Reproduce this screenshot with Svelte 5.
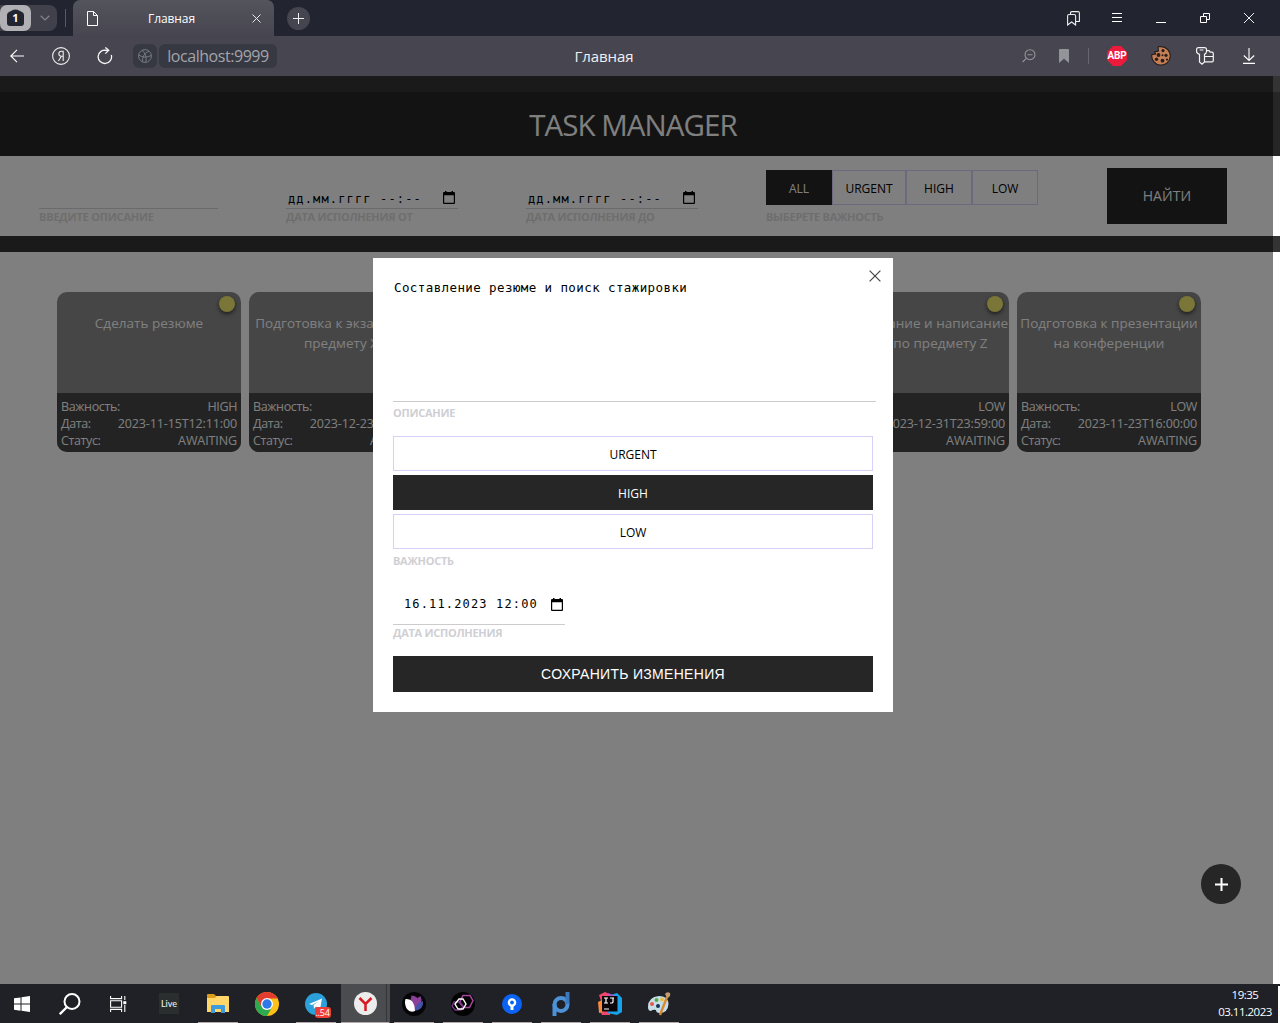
<script>
  const priorities = ['ALL', 'URGENT', 'HIGH', 'LOW'];
  const editPriorities = ['URGENT', 'HIGH', 'LOW'];
  const tasks = [
    { lines: ['Сделать резюме'], priority: 'HIGH', date: '2023-11-15T12:11:00' },
    { lines: ['Подготовка к экзамену по', 'предмету X'], priority: 'HIGH', date: '2023-12-23T10:00:00' },
    { lines: ['Курсовая работа'], priority: 'HIGH', date: '2023-12-20T12:00:00' },
    { lines: ['Составление резюме'], priority: 'HIGH', date: '2023-11-16T12:00:00' },
    { lines: ['Исследование и написание', 'статьи по предмету Z'], priority: 'LOW', date: '2023-12-31T23:59:00' },
    { lines: ['Подготовка к презентации', 'на конференции'], priority: 'LOW', date: '2023-11-23T16:00:00' }
  ];
  const apps = ['live', 'explorer', 'chrome', 'telegram', 'yandex', 'petal', 'hexes', 'source', 'pd', 'idea', 'paint'];
</script>

{#snippet calendar()}
  <svg class="cal" width="12" height="13" viewBox="0 0 12 13">
    <path d="M1 1h1V0h1.500v1h5V0H10v1h1q1 0 1 1v10q0 1-1 1H1q-1 0-1-1V2q0-1 1-1zM1.200 4.200v7.600h9.600V4.200z" fill="currentColor" fill-rule="evenodd" />
  </svg>
{/snippet}

<div class="screen">
  <div class="tabs">
    <div class="group">
      <div class="count">
        <svg width="17" height="18" viewBox="0 0 17 18"><path d="M6.5.8Q8.500 0 10.500.8L15 3Q17 4 17 6v8q0 3-3 3H3q-3 0-3-3V6q0-2 2-3z" fill="#22252f" /></svg>
        <b>1</b>
      </div>
      <svg class="chev" width="10" height="6" viewBox="0 0 10 6" fill="none" stroke="#85868d" stroke-width="1.2"><path d="M.7.8 5 5 9.300.8" /></svg>
    </div>
    <i class="sep"></i>
    <div class="tab">
      <svg width="11" height="15" viewBox="0 0 11 15" fill="none" stroke="#fff"><path d="M.5.5h6l4 4v10H.5zM6.500.5v4h4" /></svg>
      <span>Главная</span>
      <svg width="9" height="9" viewBox="0 0 9 9" stroke="#e8e8ea"><path d="m.5.5 8 8M8.500.5l-8 8" /></svg>
    </div>
    <div class="new"><svg width="11" height="11" viewBox="0 0 11 11" stroke="#eee"><path d="M0 5.500h11M5.500 0v11" /></svg></div>
    <div class="winbtns">
      <span><svg width="13" height="15" viewBox="0 0 13 15" fill="none" stroke="#eee" stroke-width="1.1"><path d="M.6 14V5q0-1.500 1.500-1.500h5q1.500 0 1.500 1.500v9l-4-3zM3.500 3.500V2Q3.500.6 5 .6h6q1.400 0 1.400 1.400v8.500H8.600" /></svg></span>
      <span><svg width="10" height="10" viewBox="0 0 10 10" stroke="#fff"><path d="M0 .5h10M0 4.500h10M0 8.500h10" /></svg></span>
      <span><svg width="10" height="10" viewBox="0 0 10 10" stroke="#fff"><path d="M0 9.500h10" /></svg></span>
      <span><svg width="10" height="10" viewBox="0 0 10 10" fill="none" stroke="#fff"><path d="M.5 3.500h6v6h-6zM3.500 3V.5h6v6H7" /></svg></span>
      <span><svg width="10" height="10" viewBox="0 0 10 10" stroke="#eee"><path d="m0 0 10 10M10 0 0 10" /></svg></span>
    </div>
  </div>

  <div class="toolbar">
    <div class="nav">
      <span><svg width="14" height="14" viewBox="0 0 14 14" fill="none" stroke="#fff" stroke-width="1.1"><path d="M14 7H1M7 .8.800 7 7 13.200" /></svg></span>
      <span class="ya">
        <svg width="18" height="18" viewBox="0 0 18 18" fill="none" stroke="#f0f0f1" stroke-width="1.1"><circle cx="9" cy="9" r="8.400" /><path d="M11.200 14V4.300H9.500C5.900 4.300 5.900 9.300 9.500 9.300H11M9.300 9.300 6.500 14" /></svg>
      </span>
      <span><svg width="16" height="18" viewBox="0 0 16 18" fill="none" stroke="#f4f4f5" stroke-width="1.300"><path d="M9.500 3.300A6.700 6.700 0 1 0 14.300 8M6.500 3.300h5.200M8.300.4l3.400 2.900L8.300 6.600" /></svg></span>
    </div>
    <div class="site"><svg width="14" height="14" viewBox="0 0 14 14" fill="none" stroke="#777983"><circle cx="7" cy="7" r="6.400" /><path d="M4 1.200Q9 5 8 13.300M11 2Q4 5 4.500 12.800M.6 6Q7 10 13 6.500" /></svg></div>
    <div class="url">localhost:9999</div>
    <div class="page-title">Главная</div>
    <div class="tools">
      <span class="zoom"><svg width="14" height="14" viewBox="0 0 14 14" fill="none" stroke="#93939a" stroke-width="1.100"><circle cx="8" cy="5.700" r="5" /><path d="M5.500 5.700h5M4.300 9.300.6 13" /></svg></span>
      <span class="mark"><svg width="10" height="14" viewBox="0 0 10 14"><path d="M0 1q0-1 1-1h8q1 0 1 1v13L5 9.800 0 14z" fill="#93939a" /></svg></span>
      <span class="divider"></span>
      <span class="abp">ABP</span>
      <span>
        <svg width="20" height="20" viewBox="0 0 20 20"><path d="M7 1.200Q7 .5 10 .6a9.300 9.300 0 1 1-9.200 8L4.500 8 3.800 5.800 7.500 5z" fill="#c47f56" stroke="#26201f" stroke-width="1.200" /><g fill="#2b1d1a"><circle cx="12" cy="4.600" r="1.600" /><circle cx="7.500" cy="9" r="1.900" /><circle cx="15" cy="9.300" r="1.600" /><circle cx="5.500" cy="13.300" r="1.700" /><circle cx="11.500" cy="14.700" r="1.900" /><circle cx="11.500" cy="9.200" r="1" /><circle cx="16" cy="13.600" r="1.100" /></g></svg>
      </span>
      <span><svg width="18" height="18" viewBox="0 0 18 18" fill="none" stroke="#f4f4f5" stroke-width="1.200"><path d="M2.500.6h6q2 0 2 2v2q0 2-2 2.700V15L6 17.200 3.500 15V7.300Q.6 6.500.6 4.500v-2q0-1.900 1.900-1.900zM3.800 3h3.600M10.500 3.600H13l1.200 1.600H16q1.300 0 1.300 1.300v7q0 1.300-1.300 1.300H8.500M8.500 9.500h8.800" /></svg></span>
      <span><svg width="12" height="16" viewBox="0 0 12 16" fill="none" stroke="#fff" stroke-width="1.100"><path d="M6 0v12.500M.8 7.500 6 12.500l5.200-5M0 15.400h12" /></svg></span>
    </div>
  </div>

  <main class="page">
    <div class="band"></div>
    <header><h1>TASK MANAGER</h1></header>
    <section class="filters">
      <div class="field desc"><div class="line"></div><label>ВВЕДИТЕ ОПИСАНИЕ</label></div>
      <div class="field date"><div class="line"><span>дд.мм.гггг --:--</span>{@render calendar()}</div><label>ДАТА ИСПОЛНЕНИЯ ОТ</label></div>
      <div class="field date"><div class="line"><span>дд.мм.гггг --:--</span>{@render calendar()}</div><label>ДАТА ИСПОЛНЕНИЯ ДО</label></div>
      <div class="field prio">
        <div class="choices">
          {#each priorities as p}<button class:on={p === 'ALL'} class:wide={p === 'URGENT'}>{p}</button>{/each}
        </div>
        <label>ВЫБЕРЕТЕ ВАЖНОСТЬ</label>
      </div>
      <button class="find">НАЙТИ</button>
    </section>
    <div class="band"></div>
    <section class="cards">
      {#each tasks as t}
        <article>
          <i class="dot"></i>
          <div class="name">{#each t.lines as l}<div>{l}</div>{/each}</div>
          <dl>
            <div><dt>Важность:</dt><dd>{t.priority}</dd></div>
            <div><dt>Дата:</dt><dd class="when">{t.date}</dd></div>
            <div><dt>Статус:</dt><dd class="state">AWAITING</dd></div>
          </dl>
        </article>
      {/each}
    </section>

    <div class="overlay"></div>
    <button class="add" aria-label="add"><svg width="13" height="13" viewBox="0 0 13 13" stroke="#fff" stroke-width="2"><path d="M0 6.500h13M6.500 0v13" /></svg></button>

    <div class="modal">
      <svg class="close" width="12" height="12" viewBox="0 0 12 12" stroke="#444" stroke-width="1.200"><path d="m.6.6 10.800 10.800M11.400.6.600 11.400" /></svg>
      <div class="text">Составление резюме и поиск стажировки</div>
      <label class="l1">ОПИСАНИЕ</label>
      <div class="stack">
        {#each editPriorities as p}<button class:on={p === 'HIGH'}>{p}</button>{/each}
      </div>
      <label class="l2">ВАЖНОСТЬ</label>
      <div class="due"><span>16.11.2023 12:00</span>{@render calendar()}</div>
      <label class="l3">ДАТА ИСПОЛНЕНИЯ</label>
      <button class="save">СОХРАНИТЬ ИЗМЕНЕНИЯ</button>
    </div>
  </main>

  <footer>
    <div class="sys"><svg width="16" height="16" viewBox="0 0 16 16" fill="#fff"><path d="M0 2.300 6.500 1.400V7.500H0zM7.500 1.200 16 0v7.500H7.500zM0 8.500h6.500v6.200L0 13.800zM7.500 8.500H16V16l-8.500-1.200z" /></svg></div>
    <div class="sys"><svg width="22" height="22" viewBox="0 0 22 22" fill="none" stroke="#fff" stroke-width="2"><circle cx="13" cy="8.500" r="7.500" /><path d="M8 14 .8 21.200" stroke-width="2.300" /></svg></div>
    <div class="sys"><svg width="17" height="16" viewBox="0 0 17 16" fill="none" stroke="#fff" stroke-width="1.100"><path d="M.6 0v2.600h11V0M.6 16v-2.600h11V16M.6 4.700h11v6.600H.6zM14.800 0v4M14.800 9v7" /><path d="M13.300 5.200h3v3h-3z" fill="#fff" stroke="none" /></svg></div>
    {#each apps as a}
      <div class="app" class:active={a === 'yandex'} class:running={a !== 'live' && a !== 'chrome'}>
        {#if a === 'live'}
          <span class="live">Live</span>
        {:else if a === 'explorer'}
          <svg width="22" height="19" viewBox="0 0 22 19"><path d="M0 1q0-1 1-1h6l2 2h12v5H0z" fill="#dc9c1b" /><path d="M0 4h8l1.500-2H21q1 0 1 1v15H0z" fill="#ffd667" /><path d="M4 19v-7q0-1 1-1h12q1 0 1 1v7h-4v-4H8v4z" fill="#3c9bdc" /></svg>
        {:else if a === 'chrome'}
          <svg width="24" height="24" viewBox="0 0 24 24"><circle cx="12" cy="12" r="12" fill="#fbc116" /><path d="M1.600 6A12 12 0 0 0 12 24L17.200 15 12 12 6.800 15z" fill="#2da94f" /><path d="M1.600 6 6.800 15 12 12 12 6.500H22.600A12 12 0 0 0 1.600 6z" fill="#e33b2e" /><circle cx="12" cy="12" r="6" fill="#fff" /><circle cx="12" cy="12" r="4.700" fill="#2d79e8" /></svg>
        {:else if a === 'telegram'}
          <svg width="22" height="22" viewBox="0 0 22 22"><circle cx="11" cy="11" r="11" fill="#2ca0da" /><path d="m4 11 13-5.500-2 11-4-3-2 2.200L8.500 12 14 8l-7 4z" fill="#fff" /></svg>
          <em>..54</em>
        {:else if a === 'yandex'}
          <svg width="23" height="23" viewBox="0 0 23 23"><circle cx="11.500" cy="11.500" r="11.500" fill="#ececec" /><path d="M5.500 6 11.500 12 17.500 6M11.500 12v7" stroke="#d8191f" stroke-width="2.500" fill="none" /></svg>
        {:else if a === 'petal'}
          <svg width="24" height="24" viewBox="0 0 24 24"><circle cx="12" cy="12" r="12" fill="#050507" /><path d="M18.500 4q4 7-7 15-1-11 7-15z" fill="#8b4097" /><path d="M9.500 3.500Q15 4 17 8q-1 7-5 10-5-7-2.500-14.500z" fill="#8b4097" /><path d="M21 9q1 9-9 10 2-8 9-10z" fill="#4652a8" /><path d="M3.500 7q9-1 9.500 12-5 2-8-2-3-5-1.500-10z" fill="#fff" /></svg>
        {:else if a === 'hexes'}
          <svg width="24" height="24" viewBox="0 0 24 24" fill="none"><circle cx="12" cy="12" r="12" fill="#020203" /><path d="M12 3.500h7l3 5-3.500 7h-6l-4-5z" stroke="#a4489e" stroke-width="1.500" /><path d="M3 10h6l3 4-2 4H4l-3-4z" stroke="#7d3686" stroke-width="1.300" /><path d="M8 7h4l3 5-3 5H7l-3-5z" stroke="#fff" stroke-width="1.400" /></svg>
        {:else if a === 'source'}
          <svg width="20" height="20" viewBox="0 0 20 20"><circle cx="10" cy="10" r="10" fill="#0b62f3" /><circle cx="10" cy="8.500" r="3.100" fill="none" stroke="#fff" stroke-width="2.400" /><path d="M8.500 12h3v4h-3z" fill="#fff" /></svg>
        {:else if a === 'pd'}
          <svg width="18" height="24" viewBox="0 0 18 24" fill="none" stroke="#4d91d6" stroke-width="4"><circle cx="9" cy="12.500" r="6.500" /><path d="M2.500 12v12" /><path d="M15.500 0v12" stroke="#3c78bd" /></svg>
        {:else if a === 'idea'}
          <svg width="24" height="24" viewBox="0 0 24 24"><path d="m1 3 6-3 9 4-4 19H4l-3-6 3-5z" fill="#f2456b" /><path d="m0 10 6-3v13l-5 1z" fill="#fb8a3c" /><path d="m13 3 6-2 5 5v14l-5 3-10-2z" fill="#16a3ec" /><path d="m10 1 8 3-6 4z" fill="#a857d4" /><path d="M4 4h15.500v15.500H4z" fill="#0c0608" /><path d="M6 6h4M8 6v5M6 11h4M12 6h4M15 6v4q0 1-1.500 1H12M6 17h5" stroke="#fff" stroke-width="1.200" fill="none" /></svg>
        {:else}
          <svg width="24" height="24" viewBox="0 0 24 24"><path d="M1 15Q1 5 12 4q9 0 9.500 8-.5 9-9 9-3.500 0-3.500-3-3-1-5 1-3 0-3-4z" fill="#c6deea" /><circle cx="5" cy="12" r="2" fill="#e8564a" /><circle cx="9.500" cy="8" r="2" fill="#58ab4b" /><circle cx="15" cy="7.500" r="2" fill="#e9bf3c" /><circle cx="11" cy="14" r="2" fill="#17334d" /><path d="m20 5-7 18" stroke="#d8892e" stroke-width="2.400" /><path d="M18 2q2-3 5-1 1 4-3 5z" fill="#c59a6b" /></svg>
        {/if}
      </div>
    {/each}
    <div class="clock"><span>19:35</span><span class="day">03.11.2023</span></div>
    <i class="edge"></i>
  </footer>
</div>

<style>
  :global(body) { margin: 0; background: #fff; }
  .screen, .screen * { box-sizing: border-box; }
  .screen { width: 1280px; height: 1023px; display: flex; flex-direction: column; overflow: hidden; font-family: 'Segoe UI', 'Open Sans', 'Noto Sans', sans-serif; }
  svg { display: block; flex: none; }
  button { font: inherit; border: 0; padding: 0; margin: 0; border-radius: 0; }

  .tabs { height: 36px; flex: none; background: #22252f; display: flex; align-items: center; }
  .group { width: 57px; height: 26px; border-radius: 0 8px 8px 0; background: #40414a; display: flex; align-items: center; }
  .count { width: 31px; height: 26px; border-radius: 7px; background: #b1b1b5; display: grid; place-items: center; }
  .count > * { grid-area: 1 / 1; }
  .count b { color: #fff; font-size: 11px; line-height: 16px; }
  .chev { margin-left: 9px; }
  .sep { width: 1px; height: 18px; background: #565862; margin: 0 7px 0 8px; }
  .tab { width: 201px; height: 36px; border-radius: 7px 7px 0 0; background: linear-gradient(#54545d, #474650); display: flex; align-items: center; padding: 0 13px 0 14px; justify-content: space-between; color: #fff; font-size: 12px; letter-spacing: -.1px; }
  .tab span { padding-right: 7px; }
  .new { width: 23px; height: 23px; border-radius: 50%; background: #44454e; margin-left: 13px; display: grid; place-items: center; }
  .winbtns { margin-left: auto; margin-right: 9px; display: flex; }
  .winbtns span, .nav span, .tools span { width: 44px; flex: none; display: grid; place-items: center; }

  .toolbar { height: 40px; flex: none; background: #474650; display: flex; align-items: center; }
  .nav { display: flex; margin-left: -5px; width: 138px; }
  .site { width: 24px; height: 24px; background: #363842; border-radius: 6px; display: grid; place-items: center; margin-right: 2px; }
  .url { width: 118px; height: 24px; border-radius: 6px; background: #363842; color: #a3a3aa; font-size: 16px; line-height: 24px; text-align: center; letter-spacing: -.45px; }
  .page-title { width: 654px; text-align: center; color: #f0f0f2; font-size: 15px; letter-spacing: -.1px; }
  .tools { display: flex; align-items: center; margin-left: 80px; }
  .tools .zoom { width: 36px; }
  .tools .mark { width: 34px; }
  .tools .divider { width: 1px; height: 16px; background: #66666e; margin: 0 6px 0 7px; }
  .tools .abp { width: 20px; height: 20px; margin: 0 12px; background: #ed1b3b; clip-path: polygon(30% 0, 70% 0, 100% 30%, 100% 70%, 70% 100%, 30% 100%, 0 70%, 0 30%); color: #fff; font: 700 10px/20px Roboto, sans-serif; letter-spacing: -.2px; }

  .page { position: relative; flex: 1; min-height: 0; background: #fff; }
  .band { height: 16px; background: #343434; }
  header { height: 64px; background: #262626; display: flex; justify-content: center; padding-right: 14px; }
  h1 { margin: 0; font-weight: 400; font-size: 29.500px; line-height: 65px; color: #fff; letter-spacing: -.95px; }
  .filters { height: 80px; display: flex; padding: 12px 0 0 39px; }
  .field { display: flex; flex-direction: column; color: #000; }
  .desc { width: 247px; }
  .date { width: 240px; }
  .prio { width: 341px; }
  label { font-size: 11px; font-weight: 700; line-height: 14px; color: #dcdcdc; letter-spacing: -.27px; white-space: nowrap; }
  .filters label { margin-top: 1px; }
  .desc label { letter-spacing: -.2px; }
  .line { height: 41px; border-bottom: 1px solid #d4d4d8; display: flex; align-items: flex-end; justify-content: space-between; padding: 0 3px 2px 2px; font: 12px/14px 'DejaVu Sans Mono', monospace; letter-spacing: 1.150px; }
  .line .cal { margin-bottom: 2px; }
  .desc .line { width: 179px; }
  .date .line { width: 172px; }
  .choices { display: flex; padding-top: 2px; }
  .choices button, .stack button { height: 35px; border: 1px solid #d8d0fb; padding-top: 2px; background: #fff; color: #000; font-size: 12px; letter-spacing: 0; }
  .choices button { width: 66px; }
  .choices .wide { width: 74px; }
  .choices + label { margin-top: 5px; }
  .choices .on, .stack .on { background: #262626; border-color: #262626; color: #fff; }
  .find { width: 120px; height: 56px; background: #262626; color: #fff; font-size: 14px; letter-spacing: .1px; padding-bottom: 2px; }

  .cards { display: flex; gap: 8px; padding: 40px 0 0 57px; }
  article { position: relative; width: 184px; height: 160px; border-radius: 10px; overflow: hidden; background: #8c8c8c; color: #fff; flex: none; display: flex; flex-direction: column; }
  .dot { position: absolute; right: 6px; top: 4px; width: 16px; height: 16px; border-radius: 50%; background: #f2ec70; box-shadow: 0 2px 4px rgba(0, 0, 0, .6); }
  .name { height: 101px; flex: none; padding-top: 21px; text-align: center; font-size: 13.500px; line-height: 20px; letter-spacing: .03px; white-space: nowrap; }
  .name div { margin: 0 -10px; }
  dl { margin: 0; flex: 1; background: #464646; padding: 5px 4px 0; font-size: 12.500px; line-height: 17px; letter-spacing: -.37px; }
  dl div { display: flex; justify-content: space-between; }
  dd { margin: 0; }
  .when { letter-spacing: -.12px; }
  .state { letter-spacing: -.1px; }

  .overlay { position: absolute; inset: 0 7px 0 0; background: rgba(0, 0, 0, .5); }
  .add { position: absolute; left: 1201px; bottom: 80px; width: 40px; height: 40px; border-radius: 50%; background: #262626; display: grid; place-items: center; }
  .modal { position: absolute; left: 373px; top: 182px; width: 520px; height: 454px; background: #fff; padding: 20px; display: flex; flex-direction: column; }
  .close { position: absolute; right: 12px; top: 12px; }
  .modal label { color: #cfcfd3; }
  .text { width: 483px; height: 124px; flex: none; border-bottom: 1px solid #ccc; padding: 2px 1px; font: 12.500px/16px 'DejaVu Sans Mono', monospace; letter-spacing: .4px; white-space: nowrap; }
  .l1 { margin: 4px 0 16px; }
  .stack { display: flex; flex-direction: column; gap: 4px; }
  .l2 { margin-top: 5px; }
  .due { width: 172px; height: 57px; border-bottom: 1px solid #ccc; display: flex; justify-content: space-between; padding: 28px 2px 0 11px; font: 12px/16px 'DejaVu Sans Mono', monospace; letter-spacing: 1.150px; }
  .due .cal { margin-top: 2px; }
  .l3 { margin: 1px 0 16px; }
  .save { height: 36px; flex: none; background: #262626; color: #fff; font: 14px 'Liberation Sans', Arial, sans-serif; letter-spacing: .3px; }

  footer { height: 39px; flex: none; background: #1f2126; display: flex; }
  .sys { width: 48px; flex: none; display: grid; place-items: center; }
  .sys:first-child { margin-left: -2px; }
  .app { position: relative; width: 49px; flex: none; display: grid; place-items: center; }
  .sys + .app { margin-left: 2.500px; }
  .active { background: linear-gradient(90deg, #4b4c50 45px, #34363a 45px, #34363a 46px, #4b4c50 46px); }
  .running::after { content: ''; position: absolute; bottom: 0; left: 4.500px; width: 40px; height: 1px; background: #b3aaac; }
  .active::after { left: 0; width: 48px; }
  .live { width: 20px; height: 21px; background: #2b2e2f; color: #eee; font: 500 9px/21px Lato, sans-serif; text-align: center; }
  .app em { position: absolute; left: 23px; top: 23px; width: 16px; height: 11px; border-radius: 3px; background: #ee3c36; color: #fff; font: 9px/11px 'Open Sans', sans-serif; text-align: center; letter-spacing: -.2px; }
  .clock { margin-left: auto; width: 66px; display: flex; flex-direction: column; align-items: center; color: #fff; font-size: 11.500px; line-height: 17px; padding-top: 2px; letter-spacing: -.5px; }
  .edge { width: 2px; height: 37px; align-self: flex-end; background: #fff; }
</style>
